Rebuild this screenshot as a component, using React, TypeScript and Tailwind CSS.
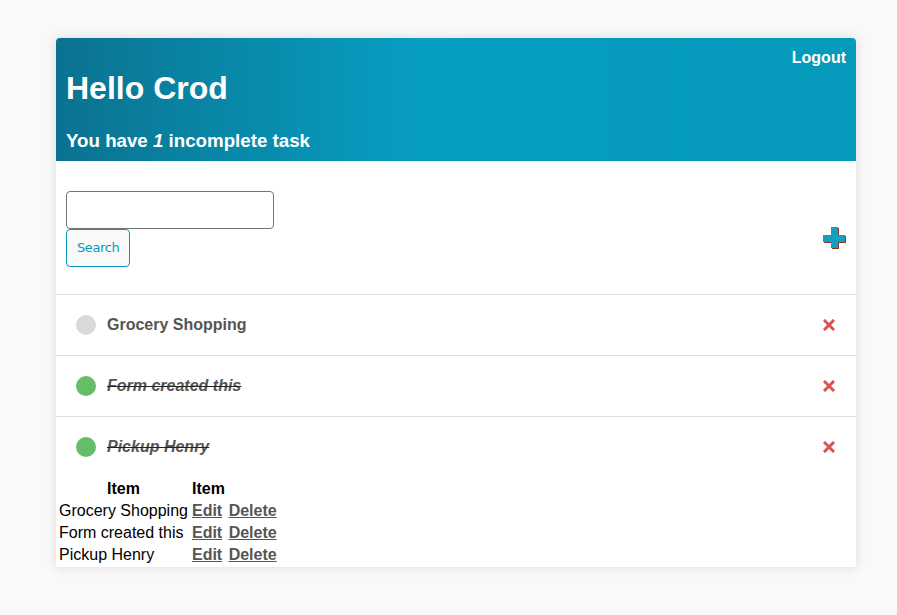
import React from "react";

const tasks = [
  { name: "Grocery Shopping", done: false },
  { name: "Form created this", done: true },
  { name: "Pickup Henry", done: true },
];

function PlusIcon() {
  return (
    <svg width="24" height="24" viewBox="0 0 24 24">
      <g fill="#8a3a2a">
        <rect x="9" y="2" width="7" height="21" />
        <rect x="1" y="10" width="22" height="7" />
      </g>
      <g fill="#12a0c2">
        <rect x="8" y="1" width="7" height="21" />
        <rect x="0" y="9" width="22" height="7" />
      </g>
    </svg>
  );
}

function XIcon() {
  return (
    <svg width="12" height="12" viewBox="0 0 12 12">
      <path d="M2 2 L10 10 M10 2 L2 10" stroke="#d9534f" strokeWidth="3" strokeLinecap="square" />
    </svg>
  );
}

export default function App() {
  return (
    <div className="min-h-[615px] bg-[#f9f9f9] pt-[38px] pl-[56px] font-['Liberation_Sans',Arial,sans-serif]">
      <div className="w-[800px] bg-white rounded-t-[4px] shadow-[0_0_12px_rgba(0,0,0,0.12)]">
        <div className="rounded-t-[4px] bg-[linear-gradient(to_right,#0b7290_0%,#079ec2_45%,#0599bb_100%)] px-[10px] pt-[11px] pb-[10px] text-white">
          <div className="flex justify-end">
            <span className="text-[16px] leading-[18px] font-bold">Logout</span>
          </div>
          <h1 className="mt-[3px] text-[32px] leading-[37px] font-bold">Hello Crod</h1>
          <h2 className="mt-[23px] text-[18.72px] leading-[21px] font-bold">
            You have <i>1</i> incomplete task
          </h2>
        </div>

        <div className="flex items-start justify-between pl-[10px] pr-[10px] pt-[30px] pb-[27px]">
          <div className="flex flex-col items-start">
            <input className="w-[208px] h-[38px] border border-[#767676] rounded-[4px] bg-white" />
            <button className="h-[38px] px-[10px] border border-[#0599c0] rounded-[4px] bg-[#f9f9f9] text-[#0599c0] text-[13px] font-['DejaVu_Sans',Verdana,sans-serif] tracking-[-0.4px]">
              Search
            </button>
          </div>
          <div className="mt-[35px] mr-[-1px]">
            <PlusIcon />
          </div>
        </div>

        {tasks.map((t) => (
          <div key={t.name} className="flex h-[61px] items-center justify-between border-t border-[#e0e0e0] pl-[20px] pr-[21px]">
            <div className="flex items-center">
              <span className={`block h-[20px] w-[20px] rounded-full ${t.done ? "bg-[#66bd68]" : "bg-[#d9d9d9]"}`} />
              <span
                className={`ml-[11px] text-[16px] font-bold text-[#555] ${t.done ? "italic line-through decoration-[#222]" : ""}`}
              >
                {t.name}
              </span>
            </div>
            <XIcon />
          </div>
        ))}

        <table className="border-separate border-spacing-[2px] text-[16px] leading-[18px] text-black">
          <thead>
            <tr>
              <th className="p-px font-bold">Item</th>
              <th className="p-px font-bold text-left">Item</th>
            </tr>
          </thead>
          <tbody>
            {tasks.map((t) => (
              <tr key={t.name}>
                <td className="p-px">{t.name}</td>
                <td className="p-px">
                  <a className="font-bold underline text-[#555]">Edit</a>{" "}
                  <a className="ml-[2px] font-bold underline text-[#555]">Delete</a>
                </td>
              </tr>
            ))}
          </tbody>
        </table>
      </div>
    </div>
  );
}
